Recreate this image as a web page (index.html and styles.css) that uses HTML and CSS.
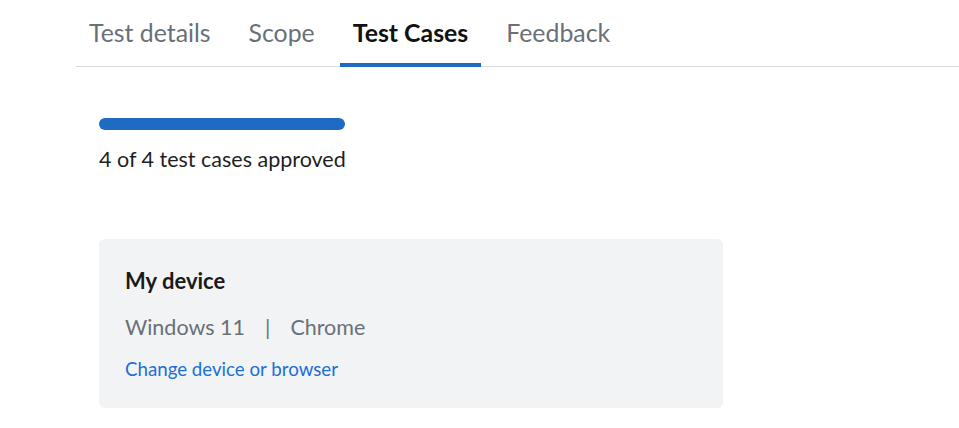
FILE: index.html
```html
<!DOCTYPE html>
<html>
    <head>
        <meta charset="UTF-8">
        <meta name="viewport" content="width=device-width, initial-scale=1.0">
        <title>Test Cases</title>
        <link rel="stylesheet" href="styles.css">
    </head>
    <body>
        <div class="page">
            <nav class="tabs">
                <a class="tab">Test details</a>
                <a class="tab">Scope</a>
                <a class="tab active">Test Cases</a>
                <a class="tab">Feedback</a>
            </nav>

            <section class="content">
                <div class="progress">
                    <div class="progressFill"></div>
                </div>
                <p class="progressText">4 of 4 test cases approved</p>

                <div class="deviceCard">
                    <h3 class="deviceTitle">My device</h3>
                    <p class="deviceInfo">Windows 11<span class="sep">|</span>Chrome</p>
                    <a class="deviceLink" href="#">Change device or browser</a>
                </div>
            </section>
        </div>
    </body>
</html>
```

FILE: styles.css
```css
body{
    margin : 0;
    background-color : #ffffff;
    font-family : Lato, "Open Sans", sans-serif;
    color : #1f1f1f;
}

.page{
    padding-left : 76px;
}

.tabs{
    display : flex;
    gap : 12px;
    height : 67px;
    border-bottom : 1px solid #d9dadc;
    box-sizing : border-box;
}

.tab{
    display : flex;
    align-items : center;
    padding : 0 13px 0 13px;
    margin-bottom : -1px;
    font-size : 24.85px;
    color : #6a7077;
    border-bottom : 4px solid transparent;
}

.tab.active{
    color : #111111;
    font-weight : 700;
    border-bottom-color : #1f6bc4;
}

.content{
    padding : 51px 0 0 23px;
}

.progress{
    width : 246px;
    height : 12px;
    border-radius : 6px;
    background-color : #e4e6e9;
    overflow : hidden;
}

.progressFill{
    width : 100%;
    height : 100%;
    background-color : #1f6bc4;
}

.progressText{
    margin : 16px 0 0 0;
    font-size : 21.5px;
    color : #1f1f1f;
}

.deviceCard{
    width : 624px;
    height : 169px;
    margin-top : 67px;
    padding : 28px 26px 0 26px;
    box-sizing : border-box;
    background-color : #f2f3f5;
    border-radius : 6px;
}

.deviceTitle{
    margin : 0;
    font-size : 22px;
    font-weight : 700;
    color : #1a1a1a;
}

.deviceInfo{
    margin : 20px 0 0 0;
    font-size : 21.5px;
    color : #6a7077;
}

.sep{
    margin : 0 20px;
}

.deviceLink{
    display : inline-block;
    margin-top : 18px;
    font-size : 18.7px;
    color : #1a6fd8;
    text-decoration : none;
}
```
